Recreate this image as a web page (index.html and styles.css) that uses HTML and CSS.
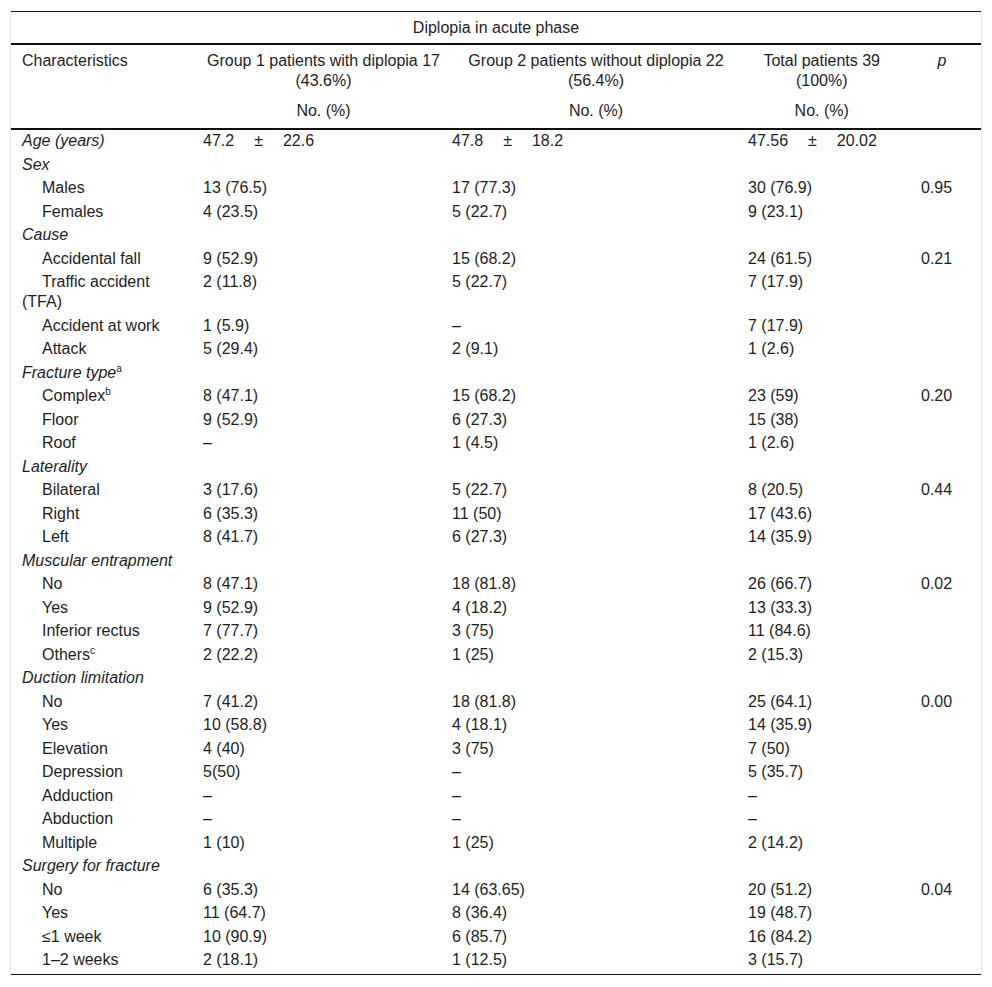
FILE: index.html
```html
<!DOCTYPE html>
<html lang="en">
<head>
<meta charset="utf-8">
<title>Diplopia in acute phase</title>
<link rel="stylesheet" href="styles.css">
</head>
<body>
<div class="frame">
<table class="tbl">
<colgroup>
<col class="w1"><col class="w2"><col class="w3"><col class="w4"><col class="w5">
</colgroup>
<thead>
<tr class="title"><th colspan="5">Diplopia in acute phase</th></tr>
<tr class="head">
<th class="hc1">Characteristics</th>
<th class="hc2">Group 1 patients with diplopia 17<br>(43.6%)</th>
<th class="hc3">Group 2 patients without diplopia 22<br>(56.4%)</th>
<th class="hc4">Total patients 39<br>(100%)</th>
<th class="hc5"><i>p</i></th>
</tr>
<tr class="sub">
<th class="hc1"></th>
<th class="hc2">No. (%)</th>
<th class="hc3">No. (%)</th>
<th class="hc4">No. (%)</th>
<th class="hc5"></th>
</tr>
</thead>
<tbody>
<tr><td class="lab"><i>Age (years)</i></td><td class="d">47.2<span class="pm">±</span>22.6</td><td class="d">47.8<span class="pm">±</span>18.2</td><td class="d">47.56<span class="pm">±</span>20.02</td><td class="pv"></td></tr>
<tr><td class="lab"><i>Sex</i></td><td class="d"></td><td class="d"></td><td class="d"></td><td class="pv"></td></tr>
<tr><td class="lab ind">Males</td><td class="d">13 (76.5)</td><td class="d">17 (77.3)</td><td class="d">30 (76.9)</td><td class="pv">0.95</td></tr>
<tr><td class="lab ind">Females</td><td class="d">4 (23.5)</td><td class="d">5 (22.7)</td><td class="d">9 (23.1)</td><td class="pv"></td></tr>
<tr><td class="lab"><i>Cause</i></td><td class="d"></td><td class="d"></td><td class="d"></td><td class="pv"></td></tr>
<tr><td class="lab ind">Accidental fall</td><td class="d">9 (52.9)</td><td class="d">15 (68.2)</td><td class="d">24 (61.5)</td><td class="pv">0.21</td></tr>
<tr><td class="lab ind">Traffic accident (TFA)</td><td class="d">2 (11.8)</td><td class="d">5 (22.7)</td><td class="d">7 (17.9)</td><td class="pv"></td></tr>
<tr><td class="lab ind">Accident at work</td><td class="d">1 (5.9)</td><td class="d">–</td><td class="d">7 (17.9)</td><td class="pv"></td></tr>
<tr><td class="lab ind">Attack</td><td class="d">5 (29.4)</td><td class="d">2 (9.1)</td><td class="d">1 (2.6)</td><td class="pv"></td></tr>
<tr><td class="lab"><i>Fracture type</i><sup>a</sup></td><td class="d"></td><td class="d"></td><td class="d"></td><td class="pv"></td></tr>
<tr><td class="lab ind">Complex<sup>b</sup></td><td class="d">8 (47.1)</td><td class="d">15 (68.2)</td><td class="d">23 (59)</td><td class="pv">0.20</td></tr>
<tr><td class="lab ind">Floor</td><td class="d">9 (52.9)</td><td class="d">6 (27.3)</td><td class="d">15 (38)</td><td class="pv"></td></tr>
<tr><td class="lab ind">Roof</td><td class="d">–</td><td class="d">1 (4.5)</td><td class="d">1 (2.6)</td><td class="pv"></td></tr>
<tr><td class="lab"><i>Laterality</i></td><td class="d"></td><td class="d"></td><td class="d"></td><td class="pv"></td></tr>
<tr><td class="lab ind">Bilateral</td><td class="d">3 (17.6)</td><td class="d">5 (22.7)</td><td class="d">8 (20.5)</td><td class="pv">0.44</td></tr>
<tr><td class="lab ind">Right</td><td class="d">6 (35.3)</td><td class="d">11 (50)</td><td class="d">17 (43.6)</td><td class="pv"></td></tr>
<tr><td class="lab ind">Left</td><td class="d">8 (41.7)</td><td class="d">6 (27.3)</td><td class="d">14 (35.9)</td><td class="pv"></td></tr>
<tr><td class="lab"><i>Muscular entrapment</i></td><td class="d"></td><td class="d"></td><td class="d"></td><td class="pv"></td></tr>
<tr><td class="lab ind">No</td><td class="d">8 (47.1)</td><td class="d">18 (81.8)</td><td class="d">26 (66.7)</td><td class="pv">0.02</td></tr>
<tr><td class="lab ind">Yes</td><td class="d">9 (52.9)</td><td class="d">4 (18.2)</td><td class="d">13 (33.3)</td><td class="pv"></td></tr>
<tr><td class="lab ind">Inferior rectus</td><td class="d">7 (77.7)</td><td class="d">3 (75)</td><td class="d">11 (84.6)</td><td class="pv"></td></tr>
<tr><td class="lab ind">Others<sup>c</sup></td><td class="d">2 (22.2)</td><td class="d">1 (25)</td><td class="d">2 (15.3)</td><td class="pv"></td></tr>
<tr><td class="lab"><i>Duction limitation</i></td><td class="d"></td><td class="d"></td><td class="d"></td><td class="pv"></td></tr>
<tr><td class="lab ind">No</td><td class="d">7 (41.2)</td><td class="d">18 (81.8)</td><td class="d">25 (64.1)</td><td class="pv">0.00</td></tr>
<tr><td class="lab ind">Yes</td><td class="d">10 (58.8)</td><td class="d">4 (18.1)</td><td class="d">14 (35.9)</td><td class="pv"></td></tr>
<tr><td class="lab ind">Elevation</td><td class="d">4 (40)</td><td class="d">3 (75)</td><td class="d">7 (50)</td><td class="pv"></td></tr>
<tr><td class="lab ind">Depression</td><td class="d">5(50)</td><td class="d">–</td><td class="d">5 (35.7)</td><td class="pv"></td></tr>
<tr><td class="lab ind">Adduction</td><td class="d">–</td><td class="d">–</td><td class="d">–</td><td class="pv"></td></tr>
<tr><td class="lab ind">Abduction</td><td class="d">–</td><td class="d">–</td><td class="d">–</td><td class="pv"></td></tr>
<tr><td class="lab ind">Multiple</td><td class="d">1 (10)</td><td class="d">1 (25)</td><td class="d">2 (14.2)</td><td class="pv"></td></tr>
<tr><td class="lab"><i>Surgery for fracture</i></td><td class="d"></td><td class="d"></td><td class="d"></td><td class="pv"></td></tr>
<tr><td class="lab ind">No</td><td class="d">6 (35.3)</td><td class="d">14 (63.65)</td><td class="d">20 (51.2)</td><td class="pv">0.04</td></tr>
<tr><td class="lab ind">Yes</td><td class="d">11 (64.7)</td><td class="d">8 (36.4)</td><td class="d">19 (48.7)</td><td class="pv"></td></tr>
<tr><td class="lab ind">≤1 week</td><td class="d">10 (90.9)</td><td class="d">6 (85.7)</td><td class="d">16 (84.2)</td><td class="pv"></td></tr>
<tr class="last"><td class="lab ind">1–2 weeks</td><td class="d">2 (18.1)</td><td class="d">1 (12.5)</td><td class="d">3 (15.7)</td><td class="pv"></td></tr>
</tbody>
</table>
</div>
</body>
</html>
```

FILE: styles.css
```css
body {
  margin: 0;
  background: #fff;
  color: #1e1e1e;
  font-family: "Liberation Sans", Arial, sans-serif;
  font-size: 16px;
  line-height: 20px;
}

.frame {
  margin: 11px 0 0 10px;
  width: 970px;
  border-left: 1px solid #e6e6e6;
  border-right: 1px solid #e6e6e6;
}

.tbl {
  width: 970px;
  table-layout: fixed;
  border-collapse: separate;
  border-spacing: 0;
}

.w1 { width: 184px; }
.w2 { width: 249px; }
.w3 { width: 296px; }
.w4 { width: 173px; }
.w5 { width: 68px; }

th {
  font-weight: normal;
  vertical-align: top;
  text-align: center;
  white-space: nowrap;
  padding-left: 0;
  padding-right: 0;
}

.title th {
  border-top: 1px solid #111;
  border-bottom: 2px solid #111;
  padding-top: 6px;
  padding-bottom: 5px;
}

.head th {
  padding-top: 6px;
  padding-bottom: 5px;
}

.sub th {
  padding-top: 5px;
  padding-bottom: 7px;
  border-bottom: 2px solid #111;
}

th.hc1 { text-align: left; padding-left: 11px; }
th.hc2 { padding-left: 8px; }
th.hc3 { padding-left: 8px; }
th.hc4 { padding-right: 9.6px; }
th.hc5 { padding-right: 10px; }

td {
  vertical-align: top;
  padding: 1px 0 2.5px 0;
}

td.lab {
  padding-left: 11px;
  padding-right: 8px;
}

td.ind { text-indent: 20px; }

td.d { padding-left: 8px; }

td.pv { padding-left: 8px; }

.last td {
  padding-bottom: 4px;
  border-bottom: 1px solid #111;
}

.pm { margin: 0 20px; }

sup {
  font-size: 10px;
  line-height: 0;
  vertical-align: 6px;
}
```
